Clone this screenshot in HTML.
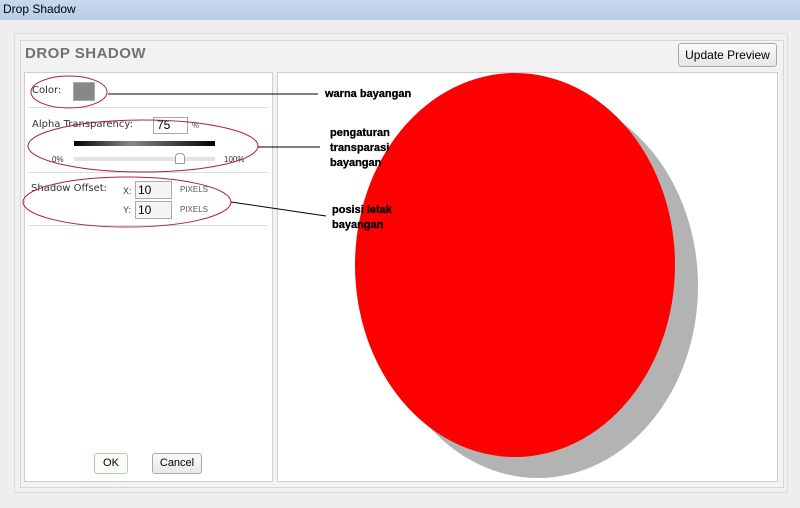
<!DOCTYPE html>
<html><head><style>
body{margin:0;width:800px;height:508px;background:#eeeeee;font-family:"Liberation Sans",sans-serif;position:relative;overflow:hidden}
.t{position:absolute;left:0;top:0;width:800px;height:20px;background:linear-gradient(#c9d9ed,#b8cde6);font-size:12px;line-height:19px;padding-left:3px;box-sizing:border-box;color:#000}
.a{position:absolute}
.d{font-family:"DejaVu Sans",sans-serif}
</style></head><body>
<div class="t">Drop Shadow</div>
<div class="a" style="left:14px;top:33px;width:772px;height:458px;border:1px solid #dcdcdc;background:#f0f0f0"></div>
<div class="a" style="left:20px;top:40px;width:762px;height:446px;border:1px solid #d6d6d6;background:#f2f2f2"></div>
<div class="a" style="left:25px;top:45px;font-size:15px;font-weight:bold;color:#6f7472;letter-spacing:0.5px">DROP SHADOW</div>
<div class="a" style="left:678px;top:43px;width:97px;height:22px;border:1px solid #a8a8a8;border-radius:3px;background:linear-gradient(#fafafa,#e6e6e6);font-size:12px;line-height:22px;text-align:center">Update Preview</div>
<div class="a" style="left:24px;top:72px;width:247px;height:408px;border:1px solid #cfcfcf;background:#fff"></div>
<div class="a" style="left:277px;top:72px;width:499px;height:408px;border:1px solid #cfcfcf;background:#fff"></div>
<div class="a d" style="left:32px;top:85px;font-size:10px;color:#333">Color:</div>
<div class="a" style="left:73px;top:82px;width:20px;height:17px;border:1px solid #aaa;background:#888"></div>
<div class="a" style="left:28px;top:107px;width:240px;border-top:1px solid #ddd"></div>
<div class="a d" style="left:32px;top:119px;font-size:10px;color:#333">Alpha Transparency:</div>
<div class="a" style="left:153px;top:117px;width:30px;height:15px;border:1px solid #aaa;font-size:12px;line-height:15px;padding-left:3px;box-sizing:content-box">75</div>
<div class="a" style="left:192px;top:121px;font-size:8px;color:#555">%</div>
<div class="a" style="left:74px;top:141px;width:141px;height:5px;background:linear-gradient(90deg,#000,#888 40%,#000)"></div>
<div class="a" style="left:74px;top:157px;width:141px;height:4px;background:#e2e2e2"></div>
<div class="a" style="left:175px;top:153px;width:8px;height:9px;border:1px solid #999;border-radius:4px 4px 1px 1px;background:#fff"></div>
<div class="a" style="left:52px;top:155px;font-size:8px;color:#333">0%</div>
<div class="a" style="left:224px;top:155px;font-size:8px;color:#333">100%</div>
<div class="a" style="left:28px;top:172px;width:240px;border-top:1px solid #ddd"></div>
<div class="a d" style="left:31px;top:183px;font-size:10px;color:#333">Shadow Offset:</div>
<div class="a" style="left:123px;top:186px;font-size:9px;color:#333">X:</div>
<div class="a" style="left:123px;top:205px;font-size:9px;color:#333">Y:</div>
<div class="a" style="left:135px;top:181px;width:33px;height:16px;border:1px solid #aaa;background:#f5f5f5;font-size:12px;line-height:16px;padding-left:2px">10</div>
<div class="a" style="left:135px;top:201px;width:33px;height:16px;border:1px solid #aaa;background:#f5f5f5;font-size:12px;line-height:16px;padding-left:2px">10</div>
<div class="a" style="left:180px;top:185px;font-size:8px;color:#555">PIXELS</div>
<div class="a" style="left:180px;top:205px;font-size:8px;color:#555">PIXELS</div>
<div class="a" style="left:28px;top:225px;width:240px;border-top:1px solid #ddd"></div>
<div class="a" style="left:94px;top:453px;width:32px;height:19px;border:1px solid #9ddf8d;border-radius:3px;background:#fbfbfb;font-size:11px;line-height:19px;text-align:center">OK</div>
<div class="a" style="left:152px;top:453px;width:48px;height:19px;border:1px solid #aaa;border-radius:3px;background:linear-gradient(#fafafa,#e8e8e8);font-size:11px;line-height:19px;text-align:center">Cancel</div>
<svg class="a" style="left:0;top:0" width="800" height="508">
<defs><clipPath id="c"><rect x="278" y="73" width="498" height="407"/></clipPath></defs>
<g clip-path="url(#c)">
<ellipse cx="538" cy="286" rx="160" ry="192" fill="#b3b3b3"/>
<ellipse cx="515" cy="265" rx="160" ry="192" fill="#ff0000"/>
</g>
<g fill="none" stroke="#b0203a" stroke-width="1">
<ellipse cx="69" cy="92" rx="38" ry="16"/>
<ellipse cx="143" cy="146" rx="115" ry="26"/>
<ellipse cx="127" cy="202" rx="104" ry="25"/>
</g>
<g stroke="#000" stroke-width="1">
<line x1="108" y1="94" x2="318" y2="94"/>
<line x1="258" y1="147" x2="320" y2="147"/>
<line x1="231" y1="202" x2="326" y2="216"/>
</g>
<g font-family="Liberation Sans" font-weight="bold" font-size="11" fill="#000" stroke="#000" stroke-width="0.3">
<text x="325" y="97">warna bayangan</text>
<text x="330" y="136">pengaturan</text>
<text x="330" y="151">transparasi</text>
<text x="330" y="166">bayangan</text>
<text x="332" y="213">posisi letak</text>
<text x="332" y="228">bayangan</text>
</g>
</svg>
</body></html>
